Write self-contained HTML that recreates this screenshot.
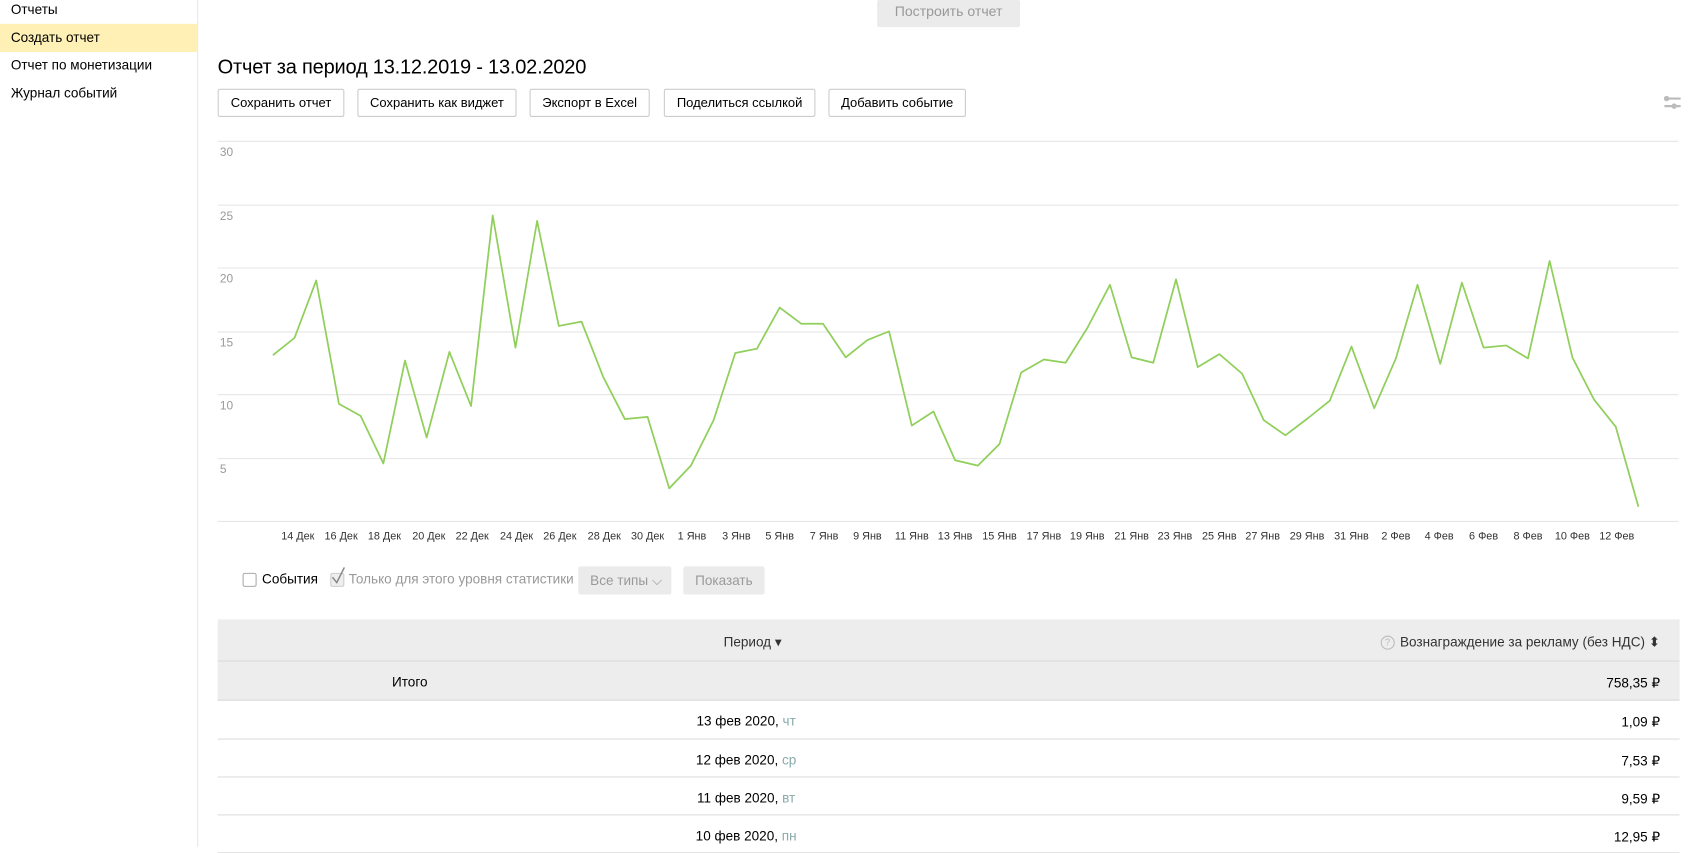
<!DOCTYPE html>
<html><head><meta charset="utf-8"><style>
html,body{margin:0;padding:0;background:#fff;width:1698px;height:847px;overflow:hidden}
#w{position:absolute;left:0;top:0;width:1568px;height:782px;transform:scale(1.0829);transform-origin:0 0;font-family:"Liberation Sans",Arial,sans-serif;color:#000}
.side{position:absolute;left:0;top:0;width:182px;height:782px;border-right:1px solid #e8e8e8}
.si{position:absolute;left:0;width:182px;height:26px;line-height:26px;padding-left:10px;box-sizing:border-box;font-size:12.5px}
.btn{position:absolute;top:82px;height:26px;line-height:24px;box-sizing:border-box;border:1px solid #ccc;border-radius:2px;font-size:12px;text-align:center;background:#fff}
.yl{position:absolute;left:203px;font-size:11px;color:#999}
.xl{position:absolute;top:490px;font-size:10px;color:#333;transform:translateX(-50%);white-space:nowrap}
.row{position:absolute;left:201px;width:1350px;border-bottom:1px solid #ddd;font-size:12.5px;box-sizing:border-box}
.d{position:absolute;left:0;width:1000px;text-align:center;padding-left:0}
.v{position:absolute;right:18px}
</style></head><body><div id="w">
<div class="side">
<div class="si" style="top:-4px">Отчеты</div>
<div class="si" style="top:22px;background:#fff1b5">Создать отчет</div>
<div class="si" style="top:47px">Отчет по монетизации</div>
<div class="si" style="top:73px">Журнал событий</div>
</div>
<div style="position:absolute;left:810px;top:0;width:132px;height:25px;background:#ebebeb;border-radius:2px;color:#999;font-size:13px;text-align:center;line-height:22px">Построить отчет</div>
<div style="position:absolute;left:201px;top:51px;font-size:18.5px;letter-spacing:-0.2px">Отчет за период 13.12.2019 - 13.02.2020</div>
<div class="btn" style="left:201px;width:117px">Сохранить отчет</div>
<div class="btn" style="left:330px;width:147px">Сохранить как виджет</div>
<div class="btn" style="left:489px;width:111px">Экспорт в Excel</div>
<div class="btn" style="left:613px;width:140px">Поделиться ссылкой</div>
<div class="btn" style="left:765px;width:127px">Добавить событие</div>
<svg style="position:absolute;left:1536px;top:87px" width="17" height="15"><line x1="1" y1="4" x2="16" y2="4" stroke="#bbb" stroke-width="2"/><circle cx="3" cy="4" r="2.5" fill="#bbb"/><line x1="1" y1="11" x2="16" y2="11" stroke="#bbb" stroke-width="2"/><circle cx="10" cy="11" r="2.5" fill="#bbb"/></svg>
<svg style="position:absolute;left:0;top:0" width="1568" height="500">
<g stroke="#e6e6e6" stroke-width="1">
<line x1="201" y1="130.5" x2="1550" y2="130.5"/><line x1="201" y1="189.5" x2="1550" y2="189.5"/><line x1="201" y1="247.5" x2="1550" y2="247.5"/><line x1="201" y1="306.5" x2="1550" y2="306.5"/><line x1="201" y1="364.5" x2="1550" y2="364.5"/><line x1="201" y1="423.5" x2="1550" y2="423.5"/><line x1="201" y1="481.5" x2="1550" y2="481.5"/>
</g>
<polyline fill="none" stroke="#8fcf5a" stroke-width="1.6" stroke-linejoin="round" points="252,328 272,312 292,259 313,373 333,384 354,428 374,333 394,404 415,325 435,375 455,199 476,321 496,204 516,301 537,297 557,348 577,387 598,385 618,451 638,430 659,388 679,326 699,322 720,284 740,299 760,299 781,330 801,314 821,306 842,393 862,380 882,425 903,430 923,410 943,344 964,332 984,335 1004,303 1025,263 1045,330 1065,335 1086,258 1106,339 1126,327 1147,345 1167,388 1187,402 1208,386 1228,370 1248,320 1269,377 1289,331 1309,263 1330,336 1350,261 1370,321 1391,319 1411,331 1431,241 1452,330 1472,369 1492,394 1513,468"/>
</svg>
<div class="yl" style="top:135px">30</div><div class="yl" style="top:194px">25</div><div class="yl" style="top:252px">20</div><div class="yl" style="top:311px">15</div><div class="yl" style="top:369px">10</div><div class="yl" style="top:428px">5</div>
<div class="xl" style="left:275px">14 Дек</div><div class="xl" style="left:315px">16 Дек</div><div class="xl" style="left:355px">18 Дек</div><div class="xl" style="left:396px">20 Дек</div><div class="xl" style="left:436px">22 Дек</div><div class="xl" style="left:477px">24 Дек</div><div class="xl" style="left:517px">26 Дек</div><div class="xl" style="left:558px">28 Дек</div><div class="xl" style="left:598px">30 Дек</div><div class="xl" style="left:639px">1 Янв</div><div class="xl" style="left:680px">3 Янв</div><div class="xl" style="left:720px">5 Янв</div><div class="xl" style="left:761px">7 Янв</div><div class="xl" style="left:801px">9 Янв</div><div class="xl" style="left:842px">11 Янв</div><div class="xl" style="left:882px">13 Янв</div><div class="xl" style="left:923px">15 Янв</div><div class="xl" style="left:964px">17 Янв</div><div class="xl" style="left:1004px">19 Янв</div><div class="xl" style="left:1045px">21 Янв</div><div class="xl" style="left:1085px">23 Янв</div><div class="xl" style="left:1126px">25 Янв</div><div class="xl" style="left:1166px">27 Янв</div><div class="xl" style="left:1207px">29 Янв</div><div class="xl" style="left:1248px">31 Янв</div><div class="xl" style="left:1289px">2 Фев</div><div class="xl" style="left:1329px">4 Фев</div><div class="xl" style="left:1370px">6 Фев</div><div class="xl" style="left:1411px">8 Фев</div><div class="xl" style="left:1452px">10 Фев</div><div class="xl" style="left:1493px">12 Фев</div>
<div style="position:absolute;left:224px;top:529px;width:11px;height:11px;border:1px solid #aaa;border-radius:2px;background:#fff"></div>
<div style="position:absolute;left:242px;top:528px;font-size:12.5px">События</div>
<div style="position:absolute;left:305px;top:529px;width:11px;height:11px;border:1px solid #ccc;border-radius:2px;background:#eee"></div>
<svg style="position:absolute;left:305px;top:523px" width="14" height="16"><path d="M2 10 L6 15 L13 1" fill="none" stroke="#888" stroke-width="1.4"/></svg>
<div style="position:absolute;left:322px;top:528px;font-size:12.5px;color:#999">Только для этого уровня статистики</div>
<div style="position:absolute;left:534px;top:523px;width:86px;height:26px;background:#ebebeb;border-radius:2px;color:#999;font-size:12.5px;line-height:26px;padding-left:11px;box-sizing:border-box">Все типы ⌵</div>
<div style="position:absolute;left:631px;top:523px;width:75px;height:26px;background:#ebebeb;border-radius:2px;color:#999;font-size:12.5px;line-height:26px;text-align:center">Показать</div>
<div class="row" style="top:572px;height:39px;background:#ededed;border-bottom-color:#d8d8d8;color:#333"><div class="d" style="top:13px;left:-6px">Период ▾</div><div class="v" style="top:13px"><span style="display:inline-block;width:11px;height:11px;border:1px solid #bbb;border-radius:50%;font-size:9px;line-height:11px;text-align:center;color:#bbb;margin-right:5px;vertical-align:1px">?</span>Вознаграждение за рекламу (без НДС) ⬍</div></div>
<div class="row" style="top:611px;height:36px;background:#ededed;border-bottom-color:#d8d8d8"><div style="position:absolute;left:161px;top:12px">Итого</div><div class="v" style="top:12px">758,35 ₽</div></div>
<div class="row" style="top:647px;height:36px"><div class="d" style="top:12px;left:-12px">13 фев 2020, <span style="color:#8aa">чт</span></div><div class="v" style="top:12px">1,09 ₽</div></div>
<div class="row" style="top:683px;height:35px"><div class="d" style="top:12px;left:-12px">12 фев 2020, <span style="color:#8aa">ср</span></div><div class="v" style="top:12px">7,53 ₽</div></div>
<div class="row" style="top:718px;height:35px"><div class="d" style="top:12px;left:-12px">11 фев 2020, <span style="color:#8aa">вт</span></div><div class="v" style="top:12px">9,59 ₽</div></div>
<div class="row" style="top:753px;height:35px"><div class="d" style="top:12px;left:-12px">10 фев 2020, <span style="color:#8aa">пн</span></div><div class="v" style="top:12px">12,95 ₽</div></div>
</div></body></html>
